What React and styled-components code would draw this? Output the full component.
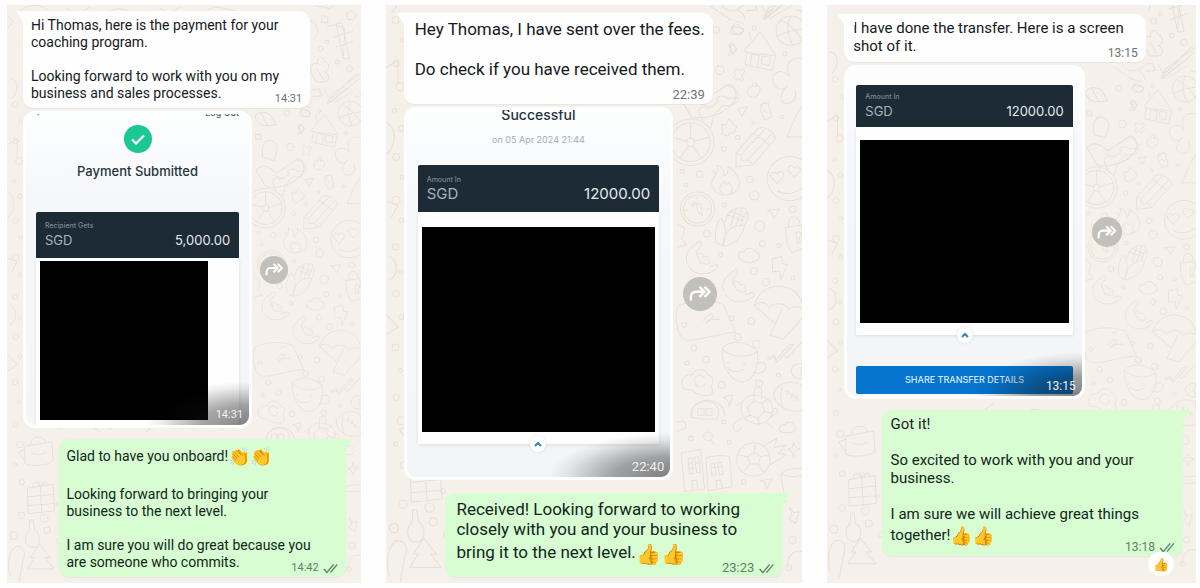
import React from 'react';
import styled, { createGlobalStyle, ThemeProvider, css } from 'styled-components';

const GlobalStyle = createGlobalStyle`
  *, *::before, *::after { box-sizing: border-box; }
  body { margin: 0; background: #fefefe; }
`;

const small = { text: 14, line: 17, time: 11, tall: 24, emoji: 18, inset: 8, head: 6, side: 16, right: 15, badge: 28, reach: 8, lift: 8 };
const medium = { text: 15, line: 18, time: 12, tall: 26, emoji: 18, inset: 9, head: 5, side: 17, right: 13, badge: 30, reach: 7, lift: 8 };
const large = { text: 17, line: 20, time: 13, tall: 30, emoji: 20, inset: 11, head: 6, side: 18, right: 19, badge: 34, reach: 10, lift: 10 };

const Gallery = styled.main`
  display: grid;
  grid-template-columns: 354fr 417fr 369fr;
  column-gap: 25px;
  padding: 5px 4px 6px 7px;
  font-family: Roboto, "Liberation Sans", sans-serif;
`;

const Panel = styled.section`
  position: relative;
  isolation: isolate;
  overflow: hidden;
  display: flex;
  flex-direction: column;
  align-items: flex-start;
  gap: 3px;
  padding: ${(p) => p.$top}px ${(p) => p.theme.right}px 6px ${(p) => p.theme.side}px;
  background: #f5f1ea;
`;

const Wallpaper = styled.svg`
  position: absolute;
  inset: 0;
  z-index: -1;
  width: 100%;
  height: 100%;
  fill: none;
  stroke: #e8e0d7;
  stroke-width: 3;
  stroke-linejoin: round;
  stroke-linecap: round;
`;

const Bubble = styled.article`
  position: relative;
  display: grid;
  width: ${(p) => p.$width || 'fit-content'};
  padding: ${(p) => p.theme.head}px 8px 0 ${(p) => p.theme.inset}px;
  border-radius: 10px;
  background: #fefefe;
  color: #14191c;
  box-shadow: 0 1px 1px rgba(60, 50, 30, 0.06);

  &::before {
    content: '';
    position: absolute;
    top: 0;
    left: -7px;
    width: 18px;
    height: 11px;
    background: inherit;
    clip-path: polygon(0 0, 100% 0, 100% 100%, 7px 100%);
  }

  ${(p) =>
    p.$own &&
    css`
      align-self: flex-end;
      margin-top: ${p.theme.lift}px;
      background: #d8fdd2;
      color: #10251a;

      &::before {
        left: auto;
        right: -7px;
        clip-path: polygon(0 0, 100% 0, 11px 100%, 0 100%);
      }
    `}
`;

const Message = styled.p`
  grid-area: 1 / 1;
  margin: 0;
  padding-bottom: ${(p) => p.$below}px;
  font-size: ${(p) => p.theme.text}px;
  line-height: ${(p) => p.theme.line}px;
  white-space: pre-line;
`;

const Emoji = styled.span`
  font-size: ${(p) => p.theme.emoji}px;
  line-height: ${(p) => p.theme.tall}px;
  vertical-align: middle;
`;

const Meta = styled.footer`
  grid-area: 1 / 1;
  place-self: end;
  display: flex;
  align-items: center;
  gap: 4px;
  padding-bottom: 2px;
  color: ${(p) => (p.$own ? '#61806a' : '#6c7275')};
  font-size: ${(p) => p.theme.time}px;
  line-height: 14px;
`;

const Ticks = styled.svg`
  width: ${(p) => p.theme.time + 4}px;
  height: 11px;
  fill: none;
  stroke: currentColor;
  stroke-width: 1.5;
`;

const Reaction = styled.span`
  position: absolute;
  right: 9px;
  bottom: -20px;
  display: grid;
  place-items: center;
  width: 26px;
  height: 24px;
  border-radius: 12px;
  background: #fefefe;
  font-size: 13px;
  line-height: 1;
`;

const Attachment = styled.div`
  display: flex;
  align-items: center;
  gap: ${(p) => p.theme.reach}px;
  width: 100%;
`;

const Card = styled.figure`
  flex: none;
  width: 71%;
  margin: 0;
  padding: ${(p) => p.$pad}px 3px 3px;
  border-radius: 12px;
  background: #fefefe;
`;

const Screen = styled.div`
  position: relative;
  overflow: hidden;
  display: flex;
  flex-direction: column;
  padding: 0 ${(p) => p.$edge}px;
  border-radius: 9px;
  background: linear-gradient(#fdfefe, #f5f7fa 26%, #f3f5f7);
  color: #27343d;
  font-family: Inter, "Liberation Sans", sans-serif;

  &::after {
    content: '';
    position: absolute;
    right: 0;
    bottom: 0;
    width: 46%;
    height: 44px;
    background: radial-gradient(farthest-side at bottom right, rgba(20, 20, 20, 0.52), rgba(20, 20, 20, 0.38) 45%, rgba(20, 20, 20, 0.08) 85%, transparent);
  }
`;

const CardTime = styled.time`
  position: absolute;
  z-index: 1;
  right: 6px;
  bottom: 3px;
  color: #f1f1f1;
  font: ${(p) => p.theme.time}px/14px Roboto, sans-serif;
`;

const AppBar = styled.div`
  display: flex;
  justify-content: space-between;
  align-items: flex-end;
  height: 4px;
  overflow: hidden;
  color: #59636a;
  font-size: 9px;
  font-weight: 500;
  line-height: 10px;
`;

const CheckBadge = styled.svg`
  align-self: center;
  width: 28px;
  height: 28px;
  margin-top: 7px;
`;

const Title = styled.h2`
  align-self: center;
  margin: ${(p) => p.$margin};
  font-size: ${(p) => p.$size}px;
  font-weight: 500;
  line-height: 20px;
`;

const Stamp = styled.p`
  align-self: center;
  margin: 9px 0 19px;
  color: #a7acb1;
  font-size: 9px;
  line-height: 12px;
`;

const Amount = styled.div`
  display: grid;
  grid-template-columns: 1fr auto;
  align-content: center;
  height: ${(p) => p.$height}px;
  margin-top: ${(p) => p.$above || 0}px;
  padding: 0 9px;
  border-radius: 2px 2px 0 0;
  background: #1c2b36;
  color: #aab3ba;
  font-size: ${(p) => p.$size}px;
  line-height: 18px;
`;

const AmountLabel = styled.span`
  grid-column: 1 / -1;
  color: #7d8992;
  font-size: 7px;
  font-weight: 500;
  line-height: 10px;
`;

const AmountValue = styled.span`
  color: #e6eaed;
`;

const Details = styled.div`
  padding: ${(p) => p.$pad};
  background: #fefefe;
  box-shadow: 0 1px 3px rgba(40, 60, 80, 0.12);
`;

const Redacted = styled.div`
  width: ${(p) => p.$width || '100%'};
  height: ${(p) => p.$height}px;
  background: #000;
`;

const Collapse = styled.button`
  align-self: center;
  display: grid;
  place-items: center;
  width: 16px;
  height: 16px;
  margin: -8px 0 ${(p) => p.$below}px;
  padding: 0;
  border: 0;
  border-radius: 50%;
  background: #fefefe;
  box-shadow: 0 0 3px rgba(40, 60, 80, 0.15);
  z-index: 1;
`;

const ShareButton = styled.button`
  height: 28px;
  margin-bottom: 2px;
  padding: 0;
  border: 0;
  border-radius: 2px;
  background: #0474ce;
  color: #d9ebf9;
  font: 500 9px/12px Inter, sans-serif;
`;

const ForwardButton = styled.button`
  display: grid;
  place-items: center;
  flex: none;
  width: ${(p) => p.theme.badge}px;
  height: ${(p) => p.theme.badge}px;
  padding: 0;
  border: 0;
  border-radius: 50%;
  background: #c2c0bb;

  svg {
    width: 66%;
    height: 66%;
  }
`;

function Forward() {
  return (
    <ForwardButton aria-label="Forward">
      <svg viewBox="0 0 24 24" fill="none" stroke="#fff" strokeWidth="2.6" strokeLinecap="square">
        <path d="M2 18.500v-2.500c0-3.500 2-5.500 5.500-5.500H15" />
        <path d="M12 6l4.500 4.500-4.500 4.500M17.500 6l4.500 4.500-4.500 4.500" />
      </svg>
    </ForwardButton>
  );
}

function DoubleTick() {
  return (
    <Ticks viewBox="0 0 17 12" role="img" aria-label="Delivered">
      <path d="M1 6.500l3.500 4L12 1.500M8.500 10.500L16 1.500" />
    </Ticks>
  );
}

function Chevron({ below }) {
  return (
    <Collapse $below={below} aria-label="Collapse">
      <svg width="8" height="6" viewBox="0 0 8 6" fill="none" stroke="#3186b5" strokeWidth="2">
        <path d="M1 5l3-3 3 3" />
      </svg>
    </Collapse>
  );
}

function AmountBar({ label, value, height, above, size }) {
  return (
    <Amount $height={height} $above={above} $size={size}>
      <AmountLabel>{label}</AmountLabel>
      <span>SGD</span>
      <AmountValue>{value}</AmountValue>
    </Amount>
  );
}

const dots = [
  [179, 210, 13], [282, 83, 6], [374, 161, 6], [191, 446, 7], [233, 412, 6], [119, 522, 10], [66, 513, 6], [78, 554, 5],
  [270, 538, 10], [283, 585, 14], [193, 614, 6], [397, 627, 10], [299, 677, 15], [141, 700, 10], [307, 730, 9], [182, 762, 6],
  [356, 736, 6], [282, 812, 10], [318, 845, 11], [398, 833, 6], [366, 350, 5], [279, 368, 4], [168, 90, 10],
  [274, 962, 10], [214, 953, 7], [73, 973, 7], [102, 1042, 9], [233, 1010, 10], [289, 1031, 11], [138, 1077, 10],
  [81, 1087, 6], [185, 1153, 10], [297, 1148, 10], [355, 1124, 6], [191, 1264, 6], [93, 1313, 7], [208, 1324, 6],
  [251, 1443, 7], [397, 1618, 11], [370, 1500, 6], [385, 1700, 9],
  [-792, 60, 10], [-770, 120, 6], [-790, 190, 9], [-778, 260, 12], [-795, 330, 6], [-775, 385, 8], [-790, 470, 10],
  [-772, 530, 6], [-790, 600, 12], [-775, 660, 7], [-792, 740, 9], [-776, 815, 6], [-790, 880, 10], [-775, 950, 7],
  [-792, 1040, 10], [-778, 1110, 6], [-790, 1190, 9], [-775, 1260, 12], [-792, 1330, 6],
  [-700, 1400, 9], [-690, 1520, 14], [-770, 1510, 12], [-650, 1470, 7], [-640, 1600, 8],
];

function Doodles({ viewBox }) {
  return (
    <Wallpaper viewBox={viewBox} preserveAspectRatio="xMidYMin slice" aria-hidden="true">
      <g transform="translate(274 -5) scale(.3333)">
        {dots.map(([x, y, r]) => (
          <circle key={`${x},${y}`} cx={x} cy={y} r={r} />
        ))}
        {/* ball, hut, flower */}
        <circle cx="392" cy="92" r="44" />
        <path d="M362 60q40 20 66 62M352 108q35-20 84-22M392 48q-20 40 6 88" />
        <path d="M252 152l48-57 47 70-12 46-80-18 6-38M252 152l12 6 78 8M271 196l4-34 22 4-4 34M307 168l24 4-4 24-24-4zM272 120l-4-24" />
        <path d="M388 228c-20-50 20-60 44-50M388 228c-30-32-62 0-46 24 6 18 30 20 40 4-20 20-30 50-2 54 24 0 30-20 24-40M440 180v110" />
        <path d="M213 88c6-20 24-22 26-4 20-2 6 22-12 20-14 0-18-8-14-16zM206 134l12-4 10 16-10 18-14 2 12-18zM228 206c8 2 10 10 14 4s14-2 10 8c-4 8-12 4-6 12 8 8 0 14-6 8-6-6-8-2-12 2-8 0-8-10-2-12 6-6-6-8-4-14z" />
        <path d="M262 272c2-12 14-18 24-14 14-4 16 10 12 18-4 10-16 20-24 14-8-2-14-8-12-18zM276 256l4-10 10 4-2 10M234 326l28-6-16 28-8-14zM302 312l22-4 10 42-20 10-14-30zM310 330l14 8M306 320a10 10 0 0 1 20-4" />
        <path d="M150 18l60 40 40 12M180 10c20 30 50 30 84-8M210 54l-10 14M310 58L380 2M330 56L400 14M300 8l16 30 20-10M408 30l16 4 8-14M232 30q20 10 24 30" />
        {/* wheel, hand */}
        <circle cx="92" cy="426" r="70" />
        <circle cx="92" cy="426" r="58" />
        <circle cx="92" cy="426" r="12" />
        <path d="M92 414v-44M103 423l44-12M98 437l26 38M86 437l-26 38M81 423l-44-12" />
        <path d="M118 340c-6-20 16-26 26-14l30-20c-14-20 20-24 30-10l30-4c6 16-30 30-44 22l-28 30-10 40-20-14zM190 262c14-16 30-12 34 4l14 20M118 310l40 12" />
        <path d="M184 372l14 2 8-18 12 14 12 10-8 16-12 2-8 10-16-8 2-14zM436 300l-30 50-26 60 56 0" />
        {/* pencil */}
        <path d="M228 458l66-74c20-8 48 10 52 32l-68 78-50 6zM228 458l14 6 4 16 18 0 14 14M244 462l68-72M262 480l72-78M280 398l46 34" />
        {/* smile with heart eyes */}
        <circle cx="388" cy="535" r="66" />
        <path d="M352 550l-18-18c-8-14 8-24 16-10 6-14 24-10 20 6zM402 530l-18-20c-2-16 14-18 18-6 8-10 22-4 18 8zM352 572q36 18 74-8" />
        {/* flame */}
        <path d="M172 496c16 4 22 16 20 32 10-4 14-20 12-30 20 14 36 34 34 52 0 20-20 34-44 34-24 0-42-20-38-42 4-12 20-24 16-46zM188 580c-16-14-6-28 4-36 6 10 10 10 14 2 12 14 14 28 2 36M158 510l8 10" />
        {/* clock */}
        <circle cx="113" cy="626" r="51" />
        <circle cx="113" cy="626" r="42" />
        <path d="M100 606l22 6 6 34-12-8-8-26-12 4zM112 590v6M78 630h6M142 626h6" />
        {/* corn */}
        <path d="M168 726c-6-30 2-60 16-72 14 20 16 50 4 82zM188 736c4-40 22-62 66-62-6 36-34 64-66 62zM196 664c4-30 30-48 60-40 10 16 8 34 0 48M200 642l50 20M210 632l44 18M212 676l16-48M228 674l18-50M242 672l14-36" />
        <path d="M322 630l36-4-16 28-8-16zM376 682l48-8 12 68-42 14-14-30zM386 680c-6-40 30-40 34-8M408 704a8 8 0 1 1 10 6l2 16-8 2z" />
        {/* hands, cloud, bolt */}
        <path id="horns" d="M82 790c-6-20 0-38 12-48l22-18c8-4 10 6 6 12l-14 18M108 754l14 34M108 764c12-12 20-4 24 6 10-6 16 0 16 12M148 800l20-8c10 4 4 14-6 18-20 16-60 14-76-12M126 786c8 6 16 8 24 0" />
        <use href="#horns" transform="translate(109 84)" />
        <path d="M236 770c-6-12 8-20 16-14 8-20 34-12 36 0 12 0 14 16 4 22-18 14-38 8-52-2-2 0-2-4-4-6zM336 776l28-8 4 22 14 2-20 46-4-26-20 2zM54 670l20 14-8 30 14 20-26 6" />
        {/* umbrella, speech note */}
        <path d="M282 916c14-50 60-70 100-54 24 8 40 24 44 50M282 916c14-14 34-14 44 6 20-20 50-14 60 4 14-10 30-10 42-2M284 916l62 54 20-44M346 970l-16 34 40 12 30-34 30-34" />
        <path d="M55 990c-10-30-8-60 0-74 40-20 100-20 134-4l38 84c-50 0-120 30-150 22-12-6-20-14-22-28zM130 960c16-24 40-24 24-4-20 22-20 6-4 2l30-2M160 914l-14 4" />
        {/* ticks, mug */}
        <path d="M322 1072l20-8 6 14 40-46 12 0-50 54-8-16-16 6zM374 1066l8 6 46-50" />
        <path d="M186 1044c0 50 20 96 60 100 40-4 50-50 46-92-20-20-74-44-106-8zM186 1044c20 20 70 36 106 8M290 1090c20-10 30 0 26 14-6 14-24 18-38 10M200 1084l6 4M250 1088l6 4M204 1102q20 20 46 4" />
        <path d="M66 1146c2-20 20-26 30-22 8-22 40-24 46-2 18 4 22 24 10 34 10 14 8 26-8 28-24 4-38-6-50-16-20 2-30-8-28-22zM134 1132c-18-20-40 0-26 20 10 14 28 4 28-6M392 1110c6-20 20-24 40-20-14 14-14 30 0 40-20 10-36 0-40-20zM190 1190l28-8-10 36-6-20z" />
        {/* football, turtle, helmet */}
        <path d="M340 1176c20-34 60-40 86-20 8 34 6 60-2 74-40 6-80-10-84-54zM366 1160c-6 20-6 50 6 66M376 1170l44 30M386 1168l-6 14M400 1176l-6 14M412 1186l-6 14" />
        <path d="M92 1250c0-40 40-60 72-40 14 8 14 30 8 44l-40 2zM114 1224h18v20h-18zM138 1224h18v20h-18z" />
        <path d="M244 1220c0-30 30-44 56-32 26 0 44 24 36 50-6 26-40 40-64 26-20-4-30-24-28-44zM262 1220l20-18 24 6 8 24-20 20-24-8zM282 1202v-18M306 1208l20-16M314 1232l22 6M294 1252l4 20M270 1244l-20 8M282 1184l2-22h20l0 24M336 1228c10-10 20 0 14 10l-16 10M244 1250l-24 20c-4 20 14 30 24 10M244 1206l-14 8M320 1266l16 14" />
        <path d="M358 1284c2-14 12-14 16-10 6-14 26-10 28 2 10 8 0 20-14 20-14 0-30 2-30-12zM54 1264c20-10 30 10 20 20l-22 8" />
        <circle cx="144" cy="1307" r="13" />
        <path d="M152 1318l12 14M400 1326l6 14 14 4-14 8-6 16-6-16-12-6 14-6z" />
        {/* comet ball */}
        <circle cx="280" cy="1376" r="50" />
        <path d="M262 1368l20-14 20 14-8 22h-24zM282 1354l4-26M302 1368l24-6M294 1390l16 24M270 1390l-18 20M262 1368l-28-6M314 1334l36-22-8 28 36-8-24 26 24 4-48 30" />
        {/* towers */}
        <path d="M64 1356l58-10 12 118-60 8zM138 1372c20-8 50-10 70-4l8 90-72 12zM84 1374l12-2 4 46-12 2zM104 1370l12-2 6 46-12 2zM152 1390l12-2 4 34-12 2zM172 1386l12-2 6 36-12 2zM98 1466l-2-26 14-2 4 26M170 1462l-2-22 14-2 4 22M84 1390l14-2M86 1404l14-2M106 1388l14-2M154 1402l30-4" />
        <path d="M300 1440l36-6-16 30-6-18zM362 1420c14-16 50-22 70-14M362 1420l10 60M362 1420c20 10 40 10 70 2M388 1520l14 16 14-4-10 36-20-16 10-8zM384 1700c-10-40 30-60 50-44" />
      </g>
      <g transform="translate(274 -108) scale(.392)">
        <path d="M246 52l6-6 6 6 8 0-2 10 2 8-10-2-10 0 2-8zM262 82c18-14 40-4 54 4l-4 80M290 72l22 106 18-2-22-106zM284 112l56-18M290 142l50-18M320 42l14-10 18 14-12 14-14-2zM208 60c20 4 36 30 18 56M226 16l44 10 20-14" />
        <path d="M216 220c-10-20 6-34 18-28-6-24 20-24 22-6 20 6 10 30-2 30 20 6 14 30 2 30l-24 0zM232 206l20 34M264 308L352 220M268 312L360 236M264 308l12-24 86-62M222 270l16-4 10 22-28 2" />
        <path d="M46 350c14-20 40-14 50 0l14 24-24 4c-16 0-36-4-40-28zM64 340l20 36M50 404h14v14H50zM184 330c14 4 34 0 28 14-10 14-28 4-28-14zM176 382l10-6 10 12-10 12zM70 440c10-30 40-20 44 6l-10 36-34-10zM50 510c20-20 40-10 60 10l60-40c20 0 30 20 20 40-20 30-70 50-110 40z" />
        <circle cx="243" cy="146" r="8" />
        <circle cx="294" cy="187" r="6" />
        <circle cx="330" cy="207" r="9" />
        <circle cx="262" cy="126" r="5" />
      </g>
      <g transform="translate(-8 374) scale(.392)">
        <path d="M76 110l80-14 4 56c-4 16-70 20-84 10zM92 104c0-26 40-30 46-6M76 118l-20 10 18 24M96 130c10 6 30 6 44-2M84 236l76-12 4 80-78 8zM84 262l78-8M86 288l78-6M122 232l4 78M100 234c-6-20 16-20 22-4 8-18 26-14 20-2" />
        <path d="M90 332h10l4 30c20 10 20 50-4 52-26 0-30-36-12-50zM30 500c-10-50 0-80 20-90 20 0 30 20 20 40l-12 66M118 404l-26 40 12 0-22 34h80l-26-34 14 0zM180 60c40-30 80-20 120 6M330 60c20-20 60-30 100-10M440 66l60-50M580 60c20-40 70-30 90 0M800 90c0-50 80-50 84 0" />
        <circle cx="42" cy="378" r="12" />
        <circle cx="142" cy="362" r="10" />
        <circle cx="66" cy="218" r="8" />
      </g>
      <g transform="translate(-8 -102) scale(.392)">
        <path d="M60 20c30-30 70-20 90 0M200 10l30 20 40-24M330 20c20-20 50 0 60 0M480 10l30 16 30-20M620 20c30-30 60 0 90-4M20 30l20 20-16 20M30 220c24 0 30 40 6 60M22 420l30-20v60M24 560c30 20 20 60 0 80M22 760l30 10-16 30M30 900c24 10 24 50 0 60M24 1050l28 30-30 20" />
      </g>
    </Wallpaper>
  );
}

export default function App() {
  return (
    <>
      <GlobalStyle />
      <Gallery>
        <ThemeProvider theme={small}>
          <Panel $top={6}>
            <Doodles viewBox="0 -102 417 680" />
            <Bubble $width="89%">
              <Message $below={6}>
                {'Hi Thomas, here is the payment for your\ncoaching program.\n\nLooking forward to work with you on my\nbusiness and sales processes.'}
              </Message>
              <Meta><time>14:31</time></Meta>
            </Bubble>
            <Attachment>
              <Card $pad={3}>
                <Screen $edge={10}>
                  <AppBar><span aria-hidden="true">‹</span><span>Log Out</span></AppBar>
                  <CheckBadge viewBox="0 0 28 28" role="img" aria-label="Success">
                    <circle cx="14" cy="14" r="14" fill="#1bc894" />
                    <path d="M8 14.500l4 4 8-8" fill="none" stroke="#fff" strokeWidth="2.200" />
                  </CheckBadge>
                  <Title $size={13} $margin="8px 0 31px">Payment Submitted</Title>
                  <AmountBar label="Recipient Gets" value="5,000.00" height={46} size={13} />
                  <Details $pad="3px 4px 5px">
                    <Redacted $width="86%" $height={159} />
                  </Details>
                  <CardTime>14:31</CardTime>
                </Screen>
              </Card>
              <Forward />
            </Attachment>
            <Bubble $own $width="89%">
              <Message $below={6}>
                {'Glad to have you onboard!'}<Emoji>👏👏</Emoji>
                {'\n\nLooking forward to bringing your\nbusiness to the next level.\n\nI am sure you will do great because you\nare someone who commits.'}
              </Message>
              <Meta $own><time>14:42</time><DoubleTick /></Meta>
            </Bubble>
          </Panel>
        </ThemeProvider>

        <ThemeProvider theme={large}>
          <Panel $top={8}>
            <Doodles viewBox="0 0 417 577" />
            <Bubble>
              <Message $below={25}>{'Hey Thomas, I have sent over the fees.\n\nDo check if you have received them.'}</Message>
              <Meta><time>22:39</time></Meta>
            </Bubble>
            <Attachment>
              <Card $pad={3}>
                <Screen $edge={11}>
                  <Title $size={14} $margin="-5px 0 0">Successful</Title>
                  <Stamp>on 05 Apr 2024 21:44</Stamp>
                  <AmountBar label="Amount In" value="12000.00" height={47} size={15} />
                  <Details $pad="15px 4px 12px">
                    <Redacted $height={205} />
                  </Details>
                  <Chevron below={25} />
                  <CardTime>22:40</CardTime>
                </Screen>
              </Card>
              <Forward />
            </Attachment>
            <Bubble $own $width="89%">
              <Message $below={8}>
                {'Received! Looking forward to working\nclosely with you and your business to\nbring it to the next level.'}<Emoji>👍👍</Emoji>
              </Message>
              <Meta $own><time>23:23</time><DoubleTick /></Meta>
            </Bubble>
          </Panel>
        </ThemeProvider>

        <ThemeProvider theme={medium}>
          <Panel $top={9}>
            <Doodles viewBox="0 -69 417 652" />
            <Bubble $width="89%">
              <Message $below={7}>{'I have done the transfer. Here is a screen\nshot of it.'}</Message>
              <Meta><time>13:15</time></Meta>
            </Bubble>
            <Attachment>
              <Card $pad={4}>
                <Screen $edge={9}>
                  <AmountBar label="Amount In" value="12000.00" height={42} above={16} size={13} />
                  <Details $pad="13px 4px 12px">
                    <Redacted $height={183} />
                  </Details>
                  <Chevron below={23} />
                  <ShareButton>SHARE TRANSFER DETAILS</ShareButton>
                  <CardTime>13:15</CardTime>
                </Screen>
              </Card>
              <Forward />
            </Attachment>
            <Bubble $own $width="89%">
              <Message $below={7}>
                {'Got it!\n\nSo excited to work with you and your\nbusiness.\n\nI am sure we will achieve great things\ntogether!'}<Emoji>👍👍</Emoji>
              </Message>
              <Meta $own><time>13:18</time><DoubleTick /></Meta>
              <Reaction>👍</Reaction>
            </Bubble>
          </Panel>
        </ThemeProvider>
      </Gallery>
    </>
  );
}
